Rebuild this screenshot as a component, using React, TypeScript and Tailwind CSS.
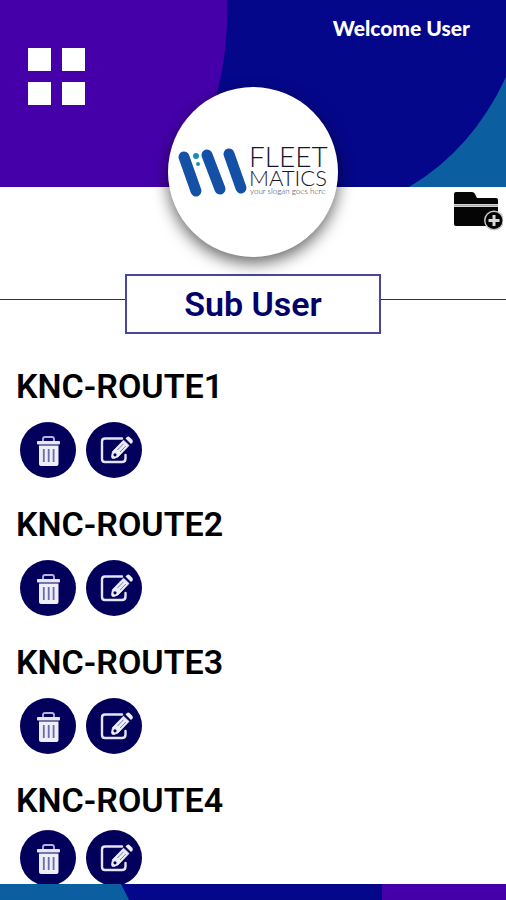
const routes = ['KNC-ROUTE1', 'KNC-ROUTE2', 'KNC-ROUTE3', 'KNC-ROUTE4']

function HeaderShapes() {
  return (
    <svg
      className="absolute inset-0 h-full w-full"
      viewBox="0 0 506 187"
      preserveAspectRatio="none"
      aria-hidden="true"
    >
      <path d="M0 0H227Q229 46 217 94Q205 141 180 187H0Z" fill="#4500aa" />
      <path d="M506 77Q472 150 409 187H506Z" fill="#0b5fa1" />
    </svg>
  )
}

function FooterShapes() {
  return (
    <svg
      className="block h-4 w-full"
      viewBox="0 0 506 16"
      preserveAspectRatio="none"
      aria-hidden="true"
    >
      <path d="M0 0H506V16H0Z" fill="#05078a" />
      <path d="M0 0H121L129 16H0Z" fill="#0b5fa1" />
      <path d="M382 0H506V16H382Z" fill="#4500aa" />
    </svg>
  )
}

function Logo() {
  return (
    <svg className="h-full w-full" viewBox="0 0 170 170" role="img" aria-label="Fleet Matics">
      <g stroke="#1450a5" strokeWidth="11" strokeLinecap="round">
        <path d="M16 70L28 104" />
        <path d="M39 68L52 102" />
        <path d="M61 67L73 101" />
      </g>
      <circle cx="28" cy="69" r="3" fill="#178fb5" />
      <circle cx="30" cy="77" r="2" fill="#178fb5" />
      <g fill="#15152e" fontFamily="Lato, sans-serif">
        <text x="81" y="80" fontSize="28" fontWeight="300">
          FLEET
        </text>
        <text x="81" y="99" fontSize="22" fontWeight="300">
          MATICS
        </text>
        <text x="82" y="107" fontSize="8" fontWeight="300" fill="#33333f">
          your slogan goes here
        </text>
      </g>
    </svg>
  )
}

function FolderPlusIcon() {
  return (
    <svg className="h-10 w-[50px]" viewBox="0 0 50 40" aria-hidden="true">
      <path d="M1 2Q1 0 3 0H19Q21 0 22 2L24 6H43Q45 6 45 8V12H1Z" fill="#050505" />
      <path d="M1 15H45V34H3Q1 34 1 32Z" fill="#050505" />
      <path d="M1 13.5H45" stroke="#aaa" strokeWidth="2" />
      <circle cx="41" cy="28.5" r="10" fill="#c8c8c8" />
      <circle cx="41" cy="28.5" r="8.5" fill="#050505" />
      <path d="M41 23V34M35.5 28.5H46.5" stroke="#d8d8d8" strokeWidth="3" />
    </svg>
  )
}

function TrashIcon() {
  return (
    <svg className="h-14 w-14" viewBox="0 0 56 56" fill="none" aria-hidden="true">
      <path d="M23 19V17Q23 15 25 15H32Q34 15 34 17V19" stroke="#b5b5dd" strokeWidth="1.8" />
      <rect x="17" y="19" width="23" height="3.4" rx="1" fill="#e6e6f5" />
      <path d="M19 23.5H38.5V42Q38.5 44 36.5 44H21Q19 44 19 42Z" fill="#eeeef8" />
      <path d="M23.8 27V40M28.7 27V40M33.6 27V40" stroke="#6c6caa" strokeWidth="1.8" />
    </svg>
  )
}

function EditIcon() {
  return (
    <svg className="h-14 w-14" viewBox="0 0 56 56" fill="none" aria-hidden="true">
      <path
        d="M36 16.5H19Q16 16.5 16 19.5V37Q16 40 19 40H36Q39.5 40 39.5 36.5V33"
        stroke="#e4e4f5"
        strokeWidth="2.4"
        strokeLinecap="round"
      />
      <path d="M28 35L45 17" stroke="#03005c" strokeWidth="9.5" />
      <path
        d="M26.5 29.5L37.5 18.2L43 23.5L32 35L28 36.5Q25.5 37 25.5 34.5Z"
        fill="#eeeef8"
        stroke="#eeeef8"
        strokeWidth="0.8"
        strokeLinejoin="round"
      />
      <path
        d="M39.5 16.5L41 15Q42.5 14 44 15.5L46 17.5Q47.5 19 46.5 20.5L45 22Z"
        fill="#eeeef8"
      />
      <path d="M31.5 28L37.5 21.8M34 30L39.8 24" stroke="#7777b0" strokeWidth="1" />
      <circle cx="29" cy="32.8" r="1.6" fill="#03005c" />
    </svg>
  )
}

function RouteItem({ name }: { name: string }) {
  return (
    <li className="group">
      <h2 className="px-4 text-[34px] font-semibold leading-10 text-black">{name}</h2>
      <div className="mt-4 flex gap-[10px] px-5 group-last:mt-[10px]">
        <button aria-label={`Delete ${name}`} className="rounded-full bg-[#03005c]">
          <TrashIcon />
        </button>
        <button aria-label={`Edit ${name}`} className="rounded-full bg-[#03005c]">
          <EditIcon />
        </button>
      </div>
    </li>
  )
}

export default function App() {
  return (
    <div className="flex h-screen flex-col overflow-hidden bg-white font-[Roboto,sans-serif]">
      <header className="relative h-[187px] shrink-0 bg-[#05078a]">
        <HeaderShapes />
        <div className="relative flex items-start justify-between pl-7 pr-9">
          <button aria-label="Menu" className="mt-12 grid grid-cols-2 gap-[11px]">
            <span className="size-[23px] bg-white" />
            <span className="size-[23px] bg-white" />
            <span className="size-[23px] bg-white" />
            <span className="size-[23px] bg-white" />
          </button>
          <p className="mt-[14px] font-[Lato,sans-serif] text-[21px] font-black leading-7 text-white">
            Welcome User
          </p>
        </div>
        <div className="absolute left-1/2 top-[87px] size-[170px] -translate-x-1/2 rounded-full bg-white shadow-[0_6px_16px_rgba(0,0,0,0.6)]">
          <Logo />
        </div>
      </header>

      <main className="flex min-h-0 flex-1 flex-col">
        <div className="flex justify-end pr-[3px] pt-[5px]">
          <button aria-label="Add sub user">
            <FolderPlusIcon />
          </button>
        </div>

        <div className="mt-[42px] flex items-start">
          <span className="mt-[25px] h-px flex-1 bg-[#333333]" />
          <h1 className="w-64 border-2 border-[#4a459f] text-center text-[34px] font-semibold leading-[56px] text-[#03006a]">
            Sub User
          </h1>
          <span className="mt-[25px] h-px flex-1 bg-[#333333]" />
        </div>

        <ul className="mt-8 flex min-h-0 flex-1 flex-col gap-[26px] overflow-y-auto [scrollbar-width:none]">
          {routes.map((name) => (
            <RouteItem key={name} name={name} />
          ))}
        </ul>
      </main>

      <footer className="shrink-0">
        <FooterShapes />
      </footer>
    </div>
  )
}
